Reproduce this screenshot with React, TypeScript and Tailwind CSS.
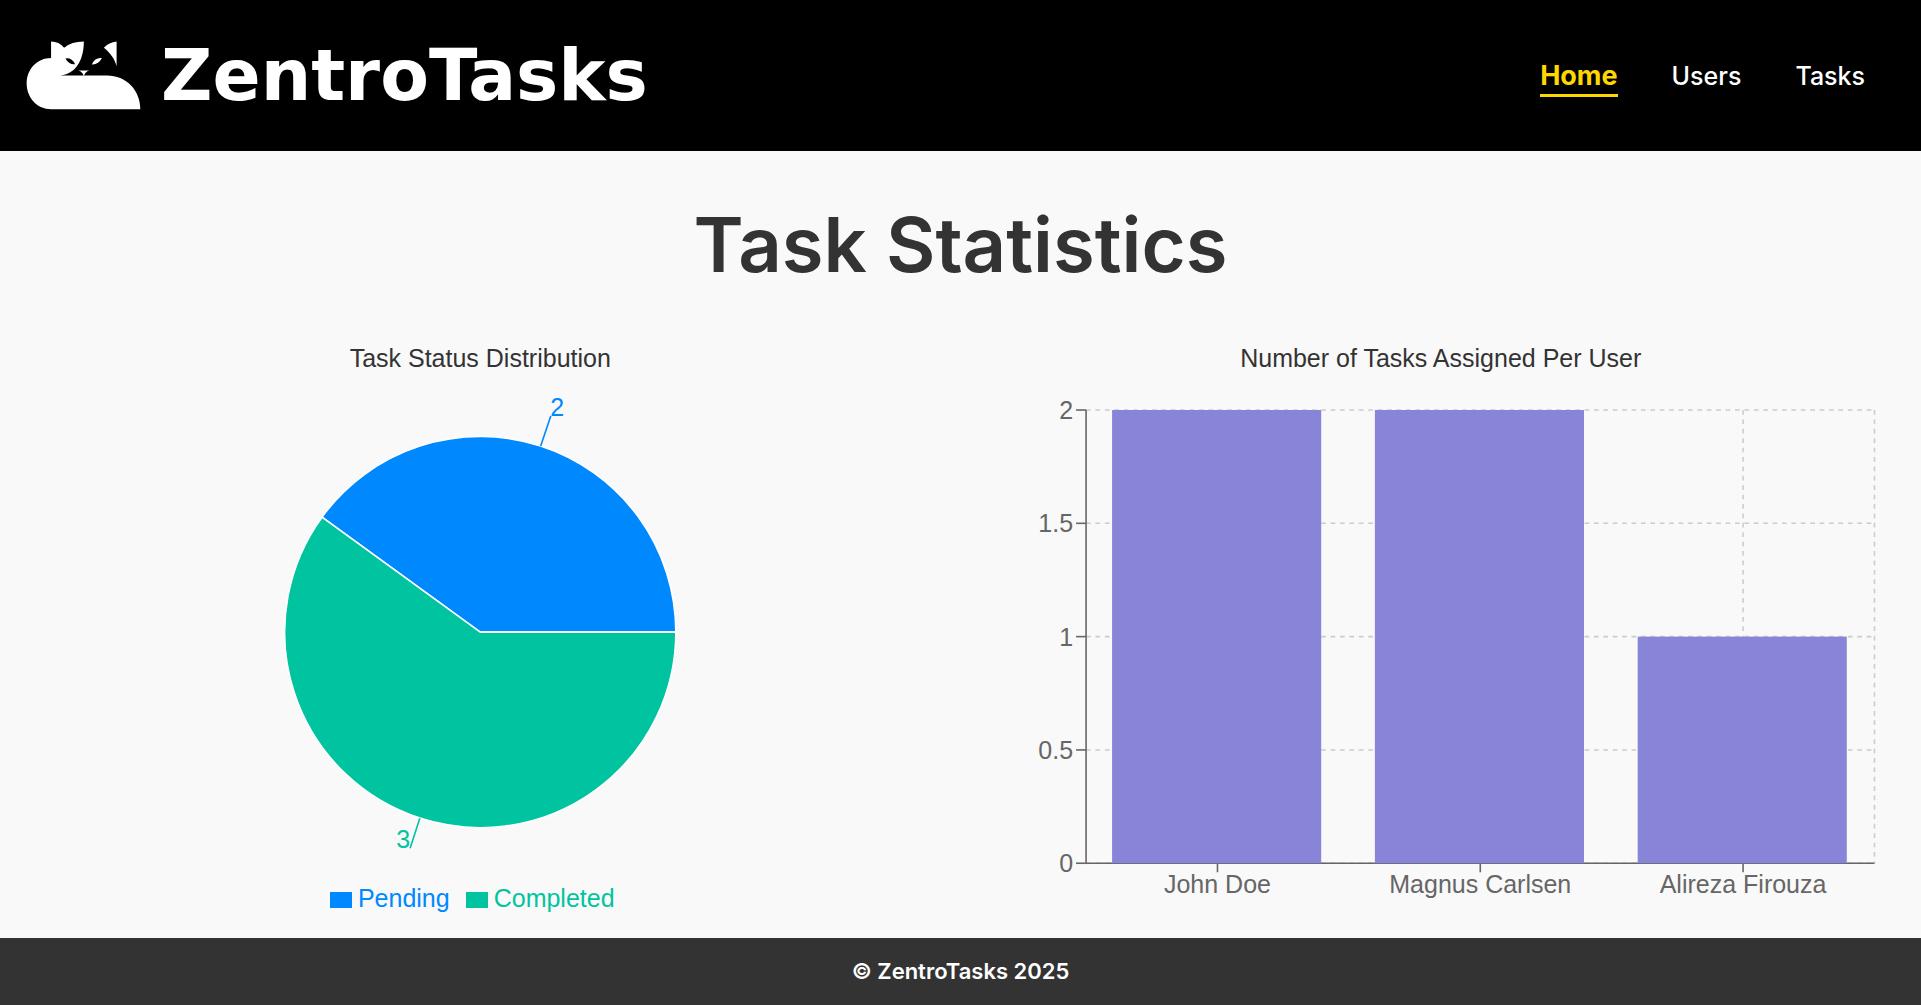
const users = [
  { name: "John Doe", tasks: 2 },
  { name: "Magnus Carlsen", tasks: 2 },
  { name: "Alireza Firouza", tasks: 1 },
];

const ticks = [0, 0.5, 1, 1.5, 2];

const plot = { left: 125, right: 913, top: 26, bottom: 479 };
const band = (plot.right - plot.left) / users.length;
const barWidth = 209;
const yOf = (v: number) => plot.bottom - (v / 2) * (plot.bottom - plot.top);

function CatLogo() {
  return (
    <svg viewBox="48 65 344 206" className="h-[69px] w-[115px] fill-white" aria-hidden="true">
      <path d="M123 116V66Q147 66 162 85Q184 66 221 66C221 112 204 162 150 168H290C348 168 390 212 390 269H123C82 269 50 235 50 192S82 116 123 116Z" />
      <path d="M319 66V140C314 120 301 101 281 85Q296 68 319 66Z" />
      <path d="M166 117Q184 113 195 134Q176 136 166 117Z" className="fill-black" />
      <path d="M275 116Q255 113 245 135Q265 136 275 116Z" />
      <path d="M205 153H237Q225 157 222 168H220Q217 157 205 153Z" />
    </svg>
  );
}

function PieChart() {
  return (
    <svg viewBox="0 0 960 490" className="block w-full text-[25px]" role="img" aria-label="Pending 2, Completed 3">
      <g stroke="#fff" strokeWidth="1.6">
        <path d="M480 248H675.5A195.5 195.5 0 0 0 321.8 133.1Z" fill="#0088fe" />
        <path d="M480 248L321.8 133.1A195.5 195.5 0 1 0 675.5 248Z" fill="#00c49f" />
      </g>
      <path d="M540.4 62L550.5 32" stroke="#0088fe" strokeWidth="1.6" />
      <path d="M419.6 434L409.9 464" stroke="#00c49f" strokeWidth="1.6" />
      <text x="550" y="32" fill="#0088fe">2</text>
      <text x="410" y="464" textAnchor="end" fill="#00c49f">3</text>
    </svg>
  );
}

function BarChart() {
  return (
    <svg viewBox="0 0 960 530" className="block w-full text-[25px]" role="img" aria-label="Tasks per user">
      <g stroke="#ccc" strokeWidth="1.6" strokeDasharray="4.7 4.7">
        {ticks.map((t) => (
          <line key={t} x1={plot.left} x2={plot.right} y1={yOf(t)} y2={yOf(t)} />
        ))}
        {users.map((u, i) => {
          const x = plot.left + band * (i + 0.5);
          return <line key={u.name} x1={x} x2={x} y1={plot.top} y2={plot.bottom} />;
        })}
        <line x1={plot.right} x2={plot.right} y1={plot.top} y2={plot.bottom} />
      </g>
      <g stroke="#666" strokeWidth="1.6">
        <line x1={plot.left} x2={plot.right} y1={plot.bottom} y2={plot.bottom} />
        <line x1={plot.left} x2={plot.left} y1={plot.top} y2={plot.bottom} />
        {ticks.map((t) => (
          <line key={t} x1={plot.left - 10} x2={plot.left} y1={yOf(t)} y2={yOf(t)} />
        ))}
        {users.map((u, i) => {
          const x = plot.left + band * (i + 0.5);
          return <line key={u.name} x1={x} x2={x} y1={plot.bottom} y2={plot.bottom + 9} />;
        })}
      </g>
      <g fill="#666">
        {ticks.map((t) => (
          <text key={t} x={plot.left - 13} y={yOf(t) + 9} textAnchor="end">
            {t}
          </text>
        ))}
        {users.map((u, i) => (
          <text key={u.name} x={plot.left + band * (i + 0.5)} y={plot.bottom + 30} textAnchor="middle">
            {u.name}
          </text>
        ))}
      </g>
      {users.map((u, i) => (
        <rect
          key={u.name}
          x={plot.left + band * i + 26}
          y={yOf(u.tasks)}
          width={barWidth}
          height={plot.bottom - yOf(u.tasks)}
          fill="#8884d8"
        />
      ))}
    </svg>
  );
}

export default function App() {
  return (
    <div className="flex min-h-screen flex-col bg-[#f9f9f9] font-['Inter',sans-serif] text-[#333]">
      <header className="flex items-center justify-between bg-black py-9 pr-14 pl-[26px] text-white">
        <a href="#" className="flex items-center gap-5">
          <CatLogo />
          <span className="font-['DejaVu_Sans',sans-serif] text-[71px] leading-[79px] font-bold">ZentroTasks</span>
        </a>
        <nav className="flex items-center gap-[54px] text-[25px] leading-9 font-medium">
          <a href="#" aria-current="page" className="border-b-3 border-[#ffd700] pt-1 text-[27px] font-bold text-[#ffd700]">
            Home
          </a>
          <a href="#">Users</a>
          <a href="#">Tasks</a>
        </nav>
      </header>

      <main className="flex-1">
        <h1 className="pt-12 text-center text-[76px] leading-[90px] font-semibold">Task Statistics</h1>
        <div className="mt-12 grid grid-cols-2 font-['Liberation_Sans',sans-serif]">
          <section>
            <h2 className="pt-1 pb-2 text-center text-[25px] leading-[35px]">Task Status Distribution</h2>
            <PieChart />
            <ul className="flex justify-center gap-4 pt-2 pr-4 text-[25px] leading-8">
              <li className="flex items-center gap-1.5 text-[#0088fe]">
                <span className="mt-1 h-4 w-[22px] bg-[#0088fe]" />
                Pending
              </li>
              <li className="flex items-center gap-1.5 text-[#00c49f]">
                <span className="mt-1 h-4 w-[22px] bg-[#00c49f]" />
                Completed
              </li>
            </ul>
          </section>
          <section>
            <h2 className="pt-1 pb-2 text-center text-[25px] leading-[35px]">Number of Tasks Assigned Per User</h2>
            <BarChart />
          </section>
        </div>
      </main>

      <footer className="bg-[#333] py-4 text-center text-[22px] leading-[35px] font-semibold text-white">
        © ZentroTasks 2025
      </footer>
    </div>
  );
}
